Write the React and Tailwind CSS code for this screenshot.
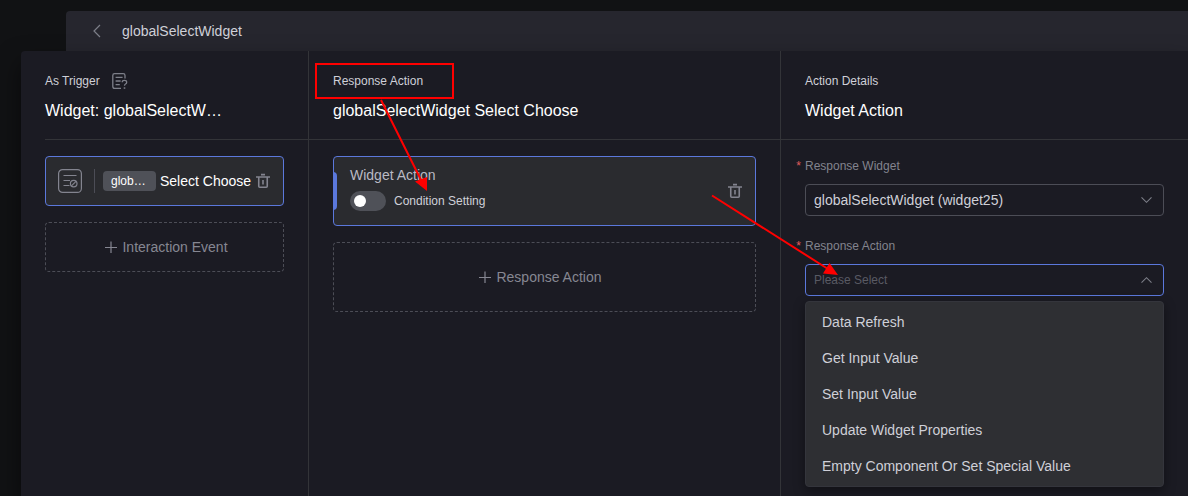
import React from "react";

const ACTIONS = [
  "Data Refresh",
  "Get Input Value",
  "Set Input Value",
  "Update Widget Properties",
  "Empty Component Or Set Special Value",
];

function TrashIcon() {
  return (
    <svg width="16" height="16" viewBox="0 0 16 16" fill="none" stroke="currentColor" strokeWidth="1.6" aria-hidden="true">
      <path d="M1 4h14M6 1.600h4M3.750 4v9.250q0 1 1 1h6.500q1 0 1-1V4M8 7v4.500" />
    </svg>
  );
}

function NoteHelpIcon() {
  return (
    <svg width="16" height="18" viewBox="0 0 16 18" fill="none" stroke="currentColor" strokeWidth="1.3" aria-hidden="true">
      <path d="M9 16.400H2.600Q.8 16.400.8 14.600V3.400Q.8 1.600 2.600 1.600h8.600Q13 1.600 13 3.400V6.500M3.600 5.400h7M3.600 9h5M3.600 12.600h4.200" />
      <path d="M10.200 10.200q0-1.800 2.200-1.800 2.300 0 2.300 1.800 0 1.200-1.200 1.800-1 .5-1 1.800" />
      <path d="M12.500 15.300v1.500" strokeWidth="1.6" />
    </svg>
  );
}

function EventIcon() {
  return (
    <svg width="24" height="24" viewBox="0 0 24 24" fill="none" stroke="currentColor" strokeWidth="1.2" aria-hidden="true">
      <rect x=".6" y=".6" width="22.8" height="22.8" rx="4" />
      <path d="M5.500 6.500H18.500M5.500 11.500H12M5.500 16.500H11.500" />
      <circle cx="15.700" cy="14.600" r="3.300" />
      <path d="M13.400 16.900l4.600-4.600" />
    </svg>
  );
}

function PlusIcon() {
  return (
    <svg width="12" height="12" viewBox="0 0 12 12" fill="none" stroke="currentColor" strokeWidth="1.2" aria-hidden="true">
      <path d="M0 6.500h12M6 .5v12" />
    </svg>
  );
}

function Chevron({ up }) {
  return (
    <svg className="pointer-events-none absolute top-1/2 right-3 -translate-y-1/2 text-[#7d7f89]" width="11" height="8" viewBox="0 0 11 8" fill="none" stroke="currentColor" strokeWidth="1.1" aria-hidden="true">
      <path d={up ? "M.5 6.700l5-5 5 5" : "M.5 1.300l5 5 5-5"} />
    </svg>
  );
}

function ColumnHeader({ label, title, icon }) {
  return (
    <>
      <div className="flex h-5 items-center gap-3 text-xs text-[#cfd0d8]">
        <span>{label}</span>
        {icon}
      </div>
      <h2 className="mt-2 text-base leading-6 text-white">{title}</h2>
    </>
  );
}

function AddButton({ className, children }) {
  return (
    <button type="button" className={`flex w-full items-center justify-center gap-[5px] rounded border border-dashed border-[#4c4d56] text-sm text-[#868792] ${className}`}>
      <PlusIcon />
      {children}
    </button>
  );
}

function FieldLabel({ htmlFor, children }) {
  return (
    <label htmlFor={htmlFor} className="relative block text-xs leading-5 text-[#83848e]">
      <span className="absolute right-full mr-1 text-[#e05b5b]" aria-hidden="true">*</span>
      {children}
    </label>
  );
}

function Annotations() {
  return (
    <svg className="pointer-events-none absolute top-0 left-0 z-20" width="860" height="300" viewBox="0 0 860 300" fill="none" stroke="#ff0000" strokeWidth="2" aria-hidden="true">
      <rect x="316" y="64" width="137" height="34" />
      <path d="M381 100L421 180M712 195.500L828 269" />
      <path d="M427 191L415 181.500L427 177ZM838 275L823 273.500L829.500 263Z" fill="#ff0000" stroke="none" />
    </svg>
  );
}

export default function App() {
  return (
    <div className="relative flex min-h-screen flex-col overflow-hidden bg-[#111214] pt-[11px] font-['Liberation_Sans',Arial,sans-serif]">
      <header className="ml-[66px] flex h-10 items-center gap-5 rounded-tl bg-[#26262e] pl-[26px] text-sm text-[#cfd0d8]">
        <button type="button" aria-label="Back" className="text-[#7d7f89]">
          <svg width="10" height="14" viewBox="0 0 10 14" fill="none" stroke="currentColor" strokeWidth="1.2" aria-hidden="true">
            <path d="M8 1L2 7l6 6" />
          </svg>
        </button>
        <h1>globalSelectWidget</h1>
      </header>

      <main className="ml-[21px] flex grow rounded-tl bg-[#1b1b23] shadow-[0_12px_24px_rgba(0,0,0,0.5)]">
        <section className="w-72 shrink-0 border-r border-[#333438]">
          <div className="ml-6 h-[89px] border-b border-[#333438] pt-5">
            <ColumnHeader label="As Trigger" title="Widget: globalSelectW…" icon={<span className="text-[#7d7f89]"><NoteHelpIcon /></span>} />
          </div>
          <div className="flex flex-col gap-4 px-6 py-4">
            <div className="flex h-[50px] items-center rounded border border-[#5b78dc] bg-[#2a2b2f] px-3 text-[#83848f]">
              <EventIcon />
              <span className="ml-3 h-6 border-l border-[#4c4d56]" />
              <span className="ml-2 w-[53px] rounded bg-[#4f5158] px-2 text-xs leading-5 text-white">glob…</span>
              <span className="ml-1 text-sm whitespace-nowrap text-white">Select Choose</span>
              <button type="button" aria-label="Delete event" className="ml-auto shrink-0">
                <TrashIcon />
              </button>
            </div>
            <AddButton className="h-[50px] pl-1">Interaction Event</AddButton>
          </div>
        </section>

        <section className="min-w-0 grow border-r border-[#333438]">
          <div className="h-[89px] border-b border-[#333438] px-6 pt-5">
            <ColumnHeader label="Response Action" title="globalSelectWidget Select Choose" />
          </div>
          <div className="flex flex-col gap-4 px-6 py-4">
            <div className="relative flex h-[70px] items-center justify-between rounded border border-[#5b78dc] bg-[#2a2b2f] pr-3 pl-4">
              <span className="absolute top-[15px] -left-px h-[38px] w-1 rounded-r bg-[#5b78dc]" />
              <div className="self-start pt-[6px]">
                <h3 className="text-sm leading-6 text-[#b9bac4]">Widget Action</h3>
                <label className="mt-1 flex items-center gap-2 text-xs text-[#cfd0d8]">
                  <input
                    type="checkbox"
                    role="switch"
                    className="flex h-5 w-9 appearance-none items-center rounded-full bg-[#4f5158] px-1 before:size-3 before:rounded-full before:bg-white checked:justify-end checked:bg-[#5b78dc]"
                  />
                  Condition Setting
                </label>
              </div>
              <button type="button" aria-label="Delete action" className="text-[#83848f]">
                <TrashIcon />
              </button>
            </div>
            <AddButton className="h-[70px] pr-2">Response Action</AddButton>
          </div>
        </section>

        <section className="w-[407px] shrink-0">
          <div className="h-[89px] border-b border-[#333438] px-6 pt-5">
            <ColumnHeader label="Action Details" title="Widget Action" />
          </div>
          <div className="px-6 pt-4">
            <FieldLabel htmlFor="response-widget">Response Widget</FieldLabel>
            <div className="relative mt-2">
              <select id="response-widget" className="block h-8 w-full appearance-none rounded border border-[#4c4d56] bg-transparent px-2 text-sm text-[#cfd0d8] outline-none">
                <option>globalSelectWidget (widget25)</option>
              </select>
              <Chevron />
            </div>
            <div className="mt-5">
              <FieldLabel htmlFor="response-action">Response Action</FieldLabel>
            </div>
            <div className="relative mt-2">
              <select id="response-action" defaultValue="" className="block h-8 w-full appearance-none rounded border border-[#5b78dc] bg-transparent px-2 text-xs text-[#595a63] outline-none">
                <option value="" disabled>Please Select</option>
                {ACTIONS.map((a) => (
                  <option key={a}>{a}</option>
                ))}
              </select>
              <Chevron up />
              <ul role="listbox" aria-label="Response Action" className="absolute top-full left-0 z-10 mt-[5px] w-full rounded border border-[#34353c] bg-[#2e2f33] py-[2px] text-sm leading-9 text-[#cfd0d8] shadow-[0_4px_12px_rgba(0,0,0,0.4)]">
                {ACTIONS.map((a) => (
                  <li key={a} role="option" aria-selected="false" className="px-4">{a}</li>
                ))}
              </ul>
            </div>
          </div>
        </section>
      </main>
      <Annotations />
    </div>
  );
}
